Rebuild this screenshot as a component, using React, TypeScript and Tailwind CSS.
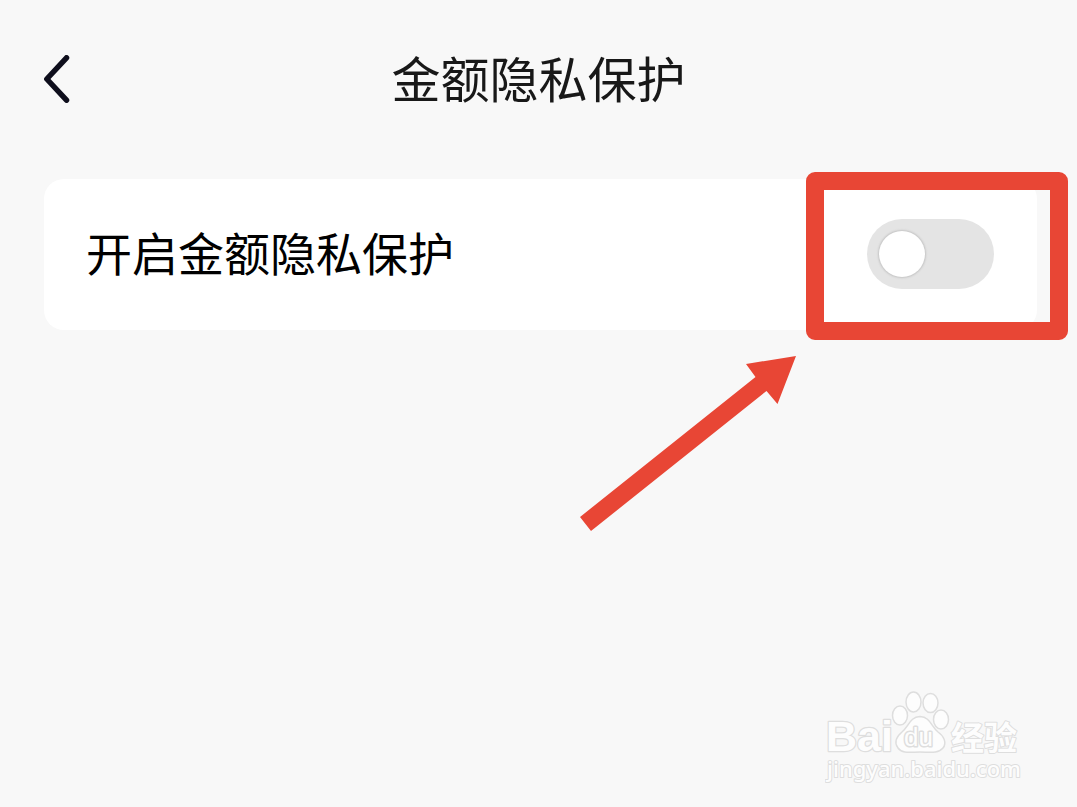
import { useState } from "react";

function BackButton() {
  return (
    <button type="button" aria-label="返回" className="flex h-16 w-12 items-center text-[#0e0e1c]">
      <svg viewBox="0 0 26 48" className="h-12 w-[26px]" fill="none" stroke="currentColor" strokeWidth="5.5" strokeLinecap="round" strokeLinejoin="round" aria-hidden="true">
        <path d="M22.5 2.8 L2.8 24 L22.5 45.2" />
      </svg>
    </button>
  );
}

function Toggle({ id }: { id: string }) {
  const [on, setOn] = useState(false);
  return (
    <span className="relative block h-[70px] w-[127px]">
      <input
        id={id}
        type="checkbox"
        role="switch"
        checked={on}
        onChange={(e) => setOn(e.target.checked)}
        className="peer block h-full w-full cursor-pointer appearance-none rounded-full bg-[#e4e4e4] checked:bg-[#e84635]"
      />
      <span className="pointer-events-none absolute top-3 left-3 h-[46px] w-[46px] rounded-full bg-white shadow-[0_0_2px_1px_#c4c4c4] peer-checked:left-[69px]" />
      <span className="pointer-events-none absolute -top-[47px] -left-[61px] h-[168px] w-[262px] rounded-[9px] border-[18px] border-[#e84635]" />
      <svg viewBox="0 0 218 178" className="pointer-events-none absolute top-[136px] -left-[288px] h-[178px] w-[218px]" fill="#e84635" aria-hidden="true">
        <path d="M217 1 L198.500 49 L187.500 36 L12 176 L1 162 L176.500 22 L167 9 Z" />
      </svg>
    </span>
  );
}

function Watermark() {
  return (
    <svg
      viewBox="0 0 200 96"
      className="absolute right-[52px] bottom-[21px] h-24 w-[200px]"
      fill="#fdfdfd"
      stroke="#dedede"
      strokeWidth="2"
      strokeLinejoin="round"
      role="img"
      aria-label="Baidu 经验 jingyan.baidu.com"
    >
      <text x="1" y="61" fontSize="43" fontWeight="700" fontFamily="'Liberation Sans', Arial, sans-serif" strokeWidth="2.5" paintOrder="stroke">Bai</text>
      <g strokeWidth="1.5">
        <ellipse cx="75" cy="25.500" rx="7.500" ry="9.500" />
        <ellipse cx="88.500" cy="12" rx="7.500" ry="10" />
        <ellipse cx="105.500" cy="13" rx="7.500" ry="9.500" />
        <ellipse cx="116" cy="29.500" rx="7.500" ry="9.500" />
        <path d="M95 26.500 C85 27 84 36 77 42 C71 47 69 53 73 58 C77 64 86 62 95 62 C104 62 113 64 118 58 C122 53 119 46 113 42 C106 36 105 27 95 26.500 Z" />
      </g>
      <text x="79" y="56" fontSize="26" fontFamily="'Liberation Sans', Arial, sans-serif" strokeWidth="3" paintOrder="stroke">du</text>
      <text x="126" y="60" fontSize="33" fontWeight="700" fontFamily="'Noto Sans CJK SC', sans-serif" strokeWidth="2" paintOrder="stroke">经验</text>
      <text x="2" y="87" fontSize="22" fontFamily="'Noto Sans', 'Open Sans', sans-serif" fontWeight="500" strokeWidth="2" paintOrder="stroke">jingyan.baidu.com</text>
    </svg>
  );
}

export default function App() {
  return (
    <div className="relative min-h-screen overflow-hidden bg-[#f8f8f8] font-['Noto_Sans_CJK_SC',sans-serif]">
      <header className="grid grid-cols-[1fr_auto_1fr] items-start px-11 pt-[47px]">
        <BackButton />
        <h1 className="text-[49px] leading-[60px] font-normal text-[#181818]">金额隐私保护</h1>
      </header>
      <main className="pt-[68px] pr-10 pl-11">
        <section className="flex items-start justify-between rounded-[20px] bg-white pt-10 pr-[43px] pb-[41px] pl-[42px]">
          <label htmlFor="privacy" className="text-[46px] leading-[64px] text-black">
            开启金额隐私保护
          </label>
          <Toggle id="privacy" />
        </section>
      </main>
      <Watermark />
    </div>
  );
}
